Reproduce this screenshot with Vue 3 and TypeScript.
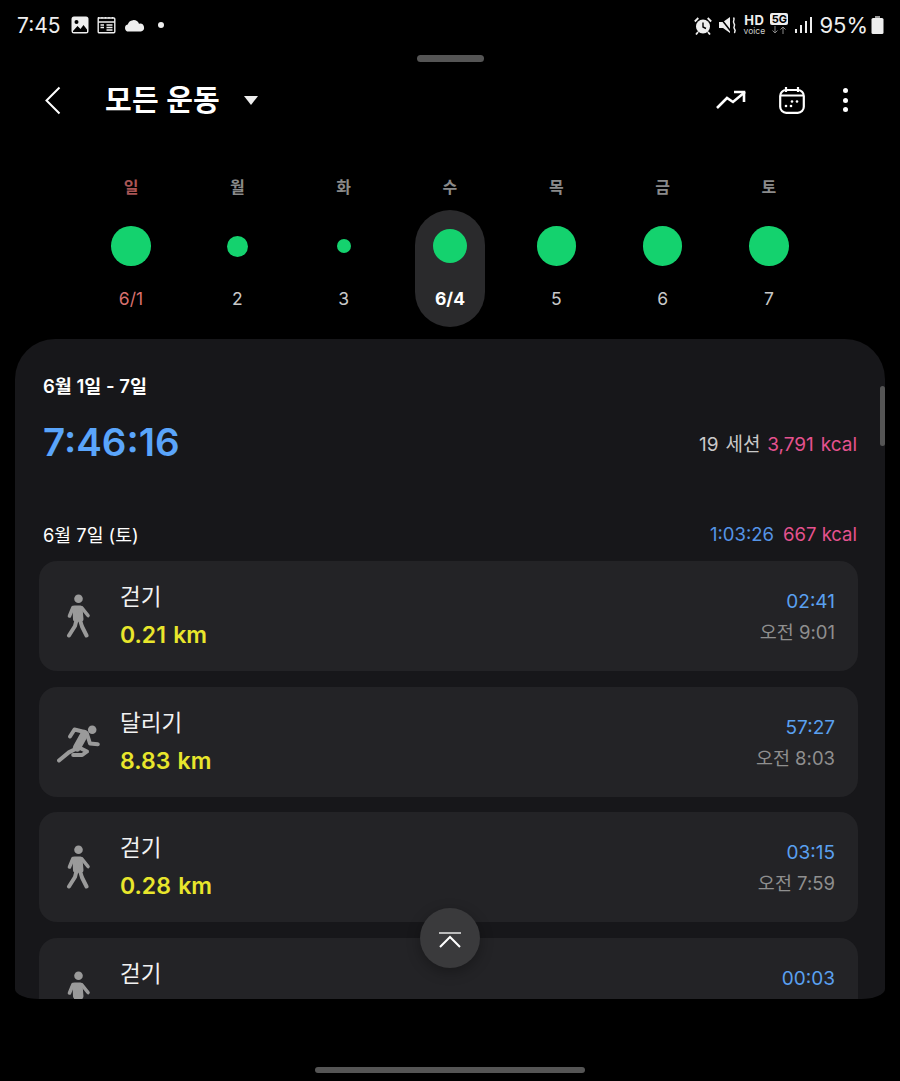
<template>
  <div class="screen">
    <div class="status">
      <div class="status-left">
        <span class="clock">7:45</span>
        <svg class="si" width="18" height="18" viewBox="0 0 18 18"><rect x="0.5" y="0.5" width="17" height="17" rx="2.5" fill="#eee"/><circle cx="5.5" cy="6" r="2" fill="#000"/><path d="M2 15l4.500-5 3 3 3-4 3.500 4.500V16H2z" fill="#000"/></svg>
        <svg class="si" width="19" height="18" viewBox="0 0 19 18" fill="none" stroke="#eee" stroke-width="1.400"><rect x="1.200" y="2" width="16.600" height="14.800" rx="1"/><path d="M1.200 6h16.600M1.500 1v1.500M5 1v1.500M8.500 1v1.500M12 1v1.500M15.500 1v1.500"/><path d="M9.500 9h6M9.500 11.500h6M9.500 14h6M3.500 9h3.500M3.500 11.500h3.500"/></svg>
        <svg class="si" width="21" height="13" viewBox="0 0 21 13"><path d="M4.500 12.500a3.500 3.500 0 0 1-.8-6.900A6 6 0 0 1 15 4.700a4 4 0 0 1 2 7.800z" fill="#eee"/></svg>
        <span class="dot"></span>
      </div>
      <div class="status-right">
        <svg width="18" height="19" viewBox="0 0 18 19" fill="none"><circle cx="9" cy="10.500" r="7" fill="#eee"/><path d="M9 6.500V11l3 1.500" stroke="#000" stroke-width="1.400"/><path d="M.8 5.500l3.500-3.500M17.200 5.500L13.700 2M4 16l-2 2.500M14 16l2 2.500" stroke="#eee" stroke-width="1.800"/></svg>
        <svg width="18" height="18" viewBox="0 0 18 18" fill="none"><path d="M0 6h4l7-5v16l-7-5H0z" fill="#eee"/><path d="M1 1.500l11 14" stroke="#000" stroke-width="1.500"/><path d="M14.500 1.500c2 2.500-1.500 3.500.5 6s-1.500 3 .5 5.500-1 2.500.5 4" stroke="#eee" stroke-width="1.500"/></svg>
        <div class="hd"><b>HD</b><small>voice</small></div>
        <div class="net"><span>5G</span><svg width="16" height="8" viewBox="0 0 16 8" fill="none" stroke="#888" stroke-width="1"><path d="M4 0v7M1.500 4.500L4 7l2.500-2.500M12 8V1M9.500 3.500L12 1l2.500 2.500"/></svg></div>
        <svg width="17" height="18" viewBox="0 0 17 18" fill="#eee"><rect x="0" y="13" width="2" height="4"/><rect x="5" y="9" width="2" height="8"/><rect x="10" y="5" width="2" height="12"/><rect x="15" y="1" width="2" height="16"/></svg>
        <span class="pct">95%</span>
        <svg class="batt" width="13" height="18" viewBox="0 0 13 18" fill="#eee"><rect x="4" y="0" width="5" height="2" fill="#999"/><rect x="0.500" y="2" width="12" height="16" rx="1.500"/></svg>
      </div>
    </div>
    <div class="handle"></div>

    <header class="top">
      <svg class="back" width="18" height="30" viewBox="0 0 18 30" fill="none" stroke="#fff" stroke-width="2"><path d="M15.500 1.500L2.500 14.500l13 13"/></svg>
      <h1>모든 운동</h1>
      <span class="caret"></span>
      <div class="actions">
        <svg width="32" height="22" viewBox="0 0 32 22" fill="none" stroke="#fff" stroke-width="2.600"><path d="M2 19l10-10 6 4L30 3"/><path d="M19 3h10v10"/></svg>
        <svg width="26" height="28" viewBox="0 0 26 28" fill="none" stroke="#fff" stroke-width="2.200"><rect x="1.200" y="4" width="23.600" height="22.800" rx="6"/><path d="M7 1v5M19 1v5M1.500 9.500h23"/><g fill="#fff" stroke="none"><circle cx="7" cy="20" r="1.300"/><circle cx="12" cy="20" r="1.300"/><circle cx="13" cy="15.500" r="1.300"/><circle cx="18" cy="15.500" r="1.300"/></g></svg>
        <div class="kebab"><i></i><i></i><i></i></div>
      </div>
    </header>

    <div class="week">
      <div v-for="d in days" :key="d.name" :class="['day', { on: d.on }]">
        <span :class="['name', { sun: d.sun }]">{{ d.name }}</span>
        <div class="mark"><span class="ball" :style="{ width: d.size + 'px', height: d.size + 'px' }"></span></div>
        <span :class="['num', { sun: d.sun }]">{{ d.num }}</span>
      </div>
    </div>

    <section class="panel">
      <div class="range">6월 1일 - 7일</div>
      <div class="total">
        <span class="big">7:46:16</span>
        <span class="sum">19 세션 <em>3,791 kcal</em></span>
      </div>
      <div class="dayhead">
        <span>6월 7일 (토)</span>
        <span class="dayvals"><u>1:03:26</u><em>667 kcal</em></span>
      </div>
      <div class="list">
        <div v-for="(s, i) in sessions" :key="i" class="card">
          <svg v-if="s.run" class="ico" width="44" height="44" viewBox="0 0 44 44" fill="none" stroke="#9a9a9a" stroke-width="4" stroke-linecap="round" stroke-linejoin="round">
            <circle cx="35.200" cy="9.800" r="4.300" fill="#9a9a9a" stroke="none"/>
            <path d="M13 16.500l4.500-7 10 2.500"/>
            <path d="M27.500 14L20 27.500" stroke-width="8"/>
            <path d="M30 14l3 9.500 7.800.7"/>
            <path d="M20 26.500l10 5-4.800 3.500h-9"/>
            <path d="M18.500 29l-6.700 3.400-9.800 8.100"/>
          </svg>
          <svg v-else class="ico" width="44" height="44" viewBox="0 0 44 44" fill="#9a9a9a" stroke="#9a9a9a" stroke-width="4" stroke-linecap="round" stroke-linejoin="round">
            <circle cx="21.500" cy="4.800" r="4.300" stroke="none"/>
            <path d="M17.500 13.500h6l1 12h-6.500z"/>
            <path d="M16 13.500l-3.500 8.500M25 14l6 7.500" fill="none" stroke-width="3.600"/>
            <path d="M19.500 26l-1.500 6-6 9.500M23 26l2 6.500 4.500 9" fill="none"/>
          </svg>
          <div class="names">
            <span class="title">{{ s.title }}</span>
            <span class="dist">{{ s.dist }}</span>
          </div>
          <div class="times">
            <span class="dur">{{ s.dur }}</span>
            <span class="at">{{ s.at }}</span>
          </div>
        </div>
      </div>
      <div class="thumb"></div>
    </section>

    <button class="up" title="맨 위로">
      <svg width="24" height="20" viewBox="0 0 24 20" fill="none"><path d="M1 5h22" stroke="#bbb" stroke-width="2"/><path d="M2 19l10-10 10 10" stroke="#fff" stroke-width="2"/></svg>
    </button>

    <div class="home"></div>
  </div>
</template>

<script setup lang="ts">
interface Day { name: string; num: string; size: number; sun?: boolean; on?: boolean }
interface Session { title: string; dist: string; dur: string; at: string; run?: boolean }

const days: Day[] = [
  { name: '일', num: '6/1', size: 39.5, sun: true },
  { name: '월', num: '2', size: 21 },
  { name: '화', num: '3', size: 14 },
  { name: '수', num: '6/4', size: 34, on: true },
  { name: '목', num: '5', size: 39.5 },
  { name: '금', num: '6', size: 39.5 },
  { name: '토', num: '7', size: 39.5 },
]

// last card runs under the panel edge, only its top line shows
const sessions: Session[] = [
  { title: '걷기', dist: '0.21 km', dur: '02:41', at: '오전 9:01' },
  { title: '달리기', dist: '8.83 km', dur: '57:27', at: '오전 8:03', run: true },
  { title: '걷기', dist: '0.28 km', dur: '03:15', at: '오전 7:59' },
  { title: '걷기', dist: '', dur: '00:03', at: '' },
]
</script>

<style>
html, body { background: #000; }
</style>

<style scoped>
.screen {
  position: relative;
  width: 900px;
  height: 1081px;
  overflow: hidden;
  background: #000;
  color: #fff;
  font-family: Inter, "Noto Sans CJK KR", sans-serif;
}

.status {
  display: flex;
  justify-content: space-between;
  align-items: center;
  height: 50px;
  padding: 0 16px 0 17px;
  color: #eee;
}
.status-left, .status-right { display: flex; align-items: center; }
.status-left { gap: 8px; }
.status-right { gap: 7px; }
.clock { font-size: 21px; margin-right: 2px; }
.dot { width: 6px; height: 6px; border-radius: 50%; background: #eee; margin-left: 5px; }
.pct { font-size: 22px; }
.batt { margin-left: -4px; }
.hd { display: flex; flex-direction: column; align-items: center; line-height: 1; width: 20px; }
.hd b { font-size: 13px; letter-spacing: .5px; }
.hd small { font-size: 8.500px; color: #ccc; }
.net { display: flex; flex-direction: column; align-items: center; gap: 1px; width: 18px; margin-top: -4px; margin-left: -1px; }
.net span { width: 18px; background: #eee; color: #000; font-size: 11px; font-weight: 700; line-height: 12px; text-align: center; border-radius: 2px; }

.handle {
  width: 67px;
  height: 7px;
  margin: 5px auto 0;
  border-radius: 4px;
  background: #555;
}

.top {
  display: flex;
  align-items: center;
  height: 30px;
  margin-top: 24px;
  padding: 0 52px 0 44px;
}
.top h1 {
  margin: 0 0 0 43px;
  font-size: 29px;
  font-weight: 700;
  letter-spacing: .3px;
  line-height: 30px;
}
.caret {
  width: 0;
  height: 0;
  margin-left: 24px;
  margin-top: -2px;
  border-left: 7px solid transparent;
  border-right: 7px solid transparent;
  border-top: 9px solid #eee;
}
.actions {
  display: flex;
  align-items: center;
  gap: 32px;
  margin-left: auto;
  margin-top: -2px;
}
.kebab { display: flex; flex-direction: column; gap: 4.500px; margin-left: 6px; }
.kebab i { width: 5px; height: 5px; border-radius: 50%; background: #fff; }

.week {
  display: grid;
  grid-template-columns: repeat(7, 70px);
  justify-content: space-between;
  margin: 94px 96px 0;
}
.day {
  display: flex;
  flex-direction: column;
  align-items: center;
  height: 117px;
  border-radius: 35px;
}
.day.on { background: #2a2a2c; }
.name {
  margin-top: -33px;
  height: 20px;
  font-size: 16px;
  font-weight: 600;
  line-height: 21px;
  color: #8a8a8a;
}
.name.sun { color: #a85555; }
.mark {
  display: flex;
  align-items: center;
  justify-content: center;
  height: 40px;
  margin-top: 29px;
}
.ball { display: block; border-radius: 50%; background: #14d26e; }
.num {
  margin-top: 23px;
  font-size: 17.500px;
  line-height: 20px;
  color: #c8c8c8;
}
.num.sun { color: #d9706e; }
.day.on .num { color: #fff; font-weight: 700; }

.panel {
  position: relative;
  box-sizing: border-box;
  height: 660px;
  margin: 12px 15px 0;
  padding: 34px 27px 0 24px;
  overflow: hidden;
  border-radius: 40px 40px 24px 24px / 40px 40px 10px 10px;
  background: #17171a;
}
.range {
  padding-left: 4px;
  font-size: 18.500px;
  font-weight: 600;
  line-height: 26px;
}
.total {
  display: flex;
  align-items: center;
  justify-content: space-between;
  height: 50px;
  margin-top: 18px;
  padding: 0 1px 0 4px;
}
.big {
  font-size: 38.500px;
  font-weight: 600;
  color: #5aa5fb;
}
.sum {
  font-size: 19px;
  word-spacing: 1.500px;
  color: #c9c9c9;
}
em { font-style: normal; color: #e5528f; }
.dayhead {
  display: flex;
  align-items: center;
  justify-content: space-between;
  height: 26px;
  margin-top: 54px;
  padding: 0 1px 0 4px;
  font-size: 18.300px;
}
.dayvals { font-size: 18.500px; }
.dayvals u { text-decoration: none; color: #5594e6; }
.dayvals em { margin-left: 9px; }
.list {
  display: flex;
  flex-direction: column;
  gap: 15.700px;
  margin-top: 14px;
}
.card {
  display: flex;
  align-items: center;
  flex-shrink: 0;
  height: 110px;
  padding: 0 23px 0 18px;
  border-radius: 18px;
  background: #232326;
}
.ico { flex-shrink: 0; }
.names {
  display: flex;
  flex-direction: column;
  margin-left: 19px;
  margin-top: -1px;
}
.title { font-size: 22.500px; line-height: 32px; color: #f2f2f2; }
.dist { height: 30px; margin-top: 7px; font-size: 23px; font-weight: 600; word-spacing: 1.500px; line-height: 30px; color: #e8e62c; }
.times {
  display: flex;
  flex-direction: column;
  align-items: flex-end;
  margin-left: auto;
  margin-top: 2px;
}
.dur { font-size: 19px; line-height: 26px; color: #5aa0f0; }
.at { height: 26px; margin-top: 4px; font-size: 18.500px; line-height: 26px; color: #8f8f8f; }
.thumb {
  position: absolute;
  top: 47px;
  right: 0;
  width: 5px;
  height: 60px;
  border-radius: 3px;
  background: #555;
}

.up {
  position: absolute;
  left: 420px;
  top: 908px;
  display: flex;
  align-items: center;
  justify-content: center;
  width: 60px;
  height: 60px;
  padding: 0;
  border: none;
  border-radius: 50%;
  background: #3a3a3c;
  box-shadow: 0 4px 14px rgba(0, 0, 0, .3);
}
.home {
  position: absolute;
  left: 315px;
  top: 1067px;
  width: 270px;
  height: 6px;
  border-radius: 3px;
  background: #555;
}
</style>
